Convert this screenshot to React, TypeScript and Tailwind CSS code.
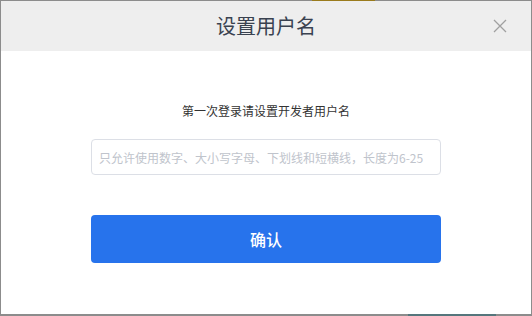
import React, { useState } from 'react';

const FONT = '"Noto Sans CJK SC", "Noto Sans", sans-serif';

const CloseIcon: React.FC = () => (
  <svg width="14" height="14" viewBox="0 0 14 14" fill="none">
    <path d="M1 1L13 13M13 1L1 13" stroke="#a0a0a0" strokeWidth="1.3" />
  </svg>
);

const App: React.FC = () => {
  const [username, setUsername] = useState('');

  return (
    <div className="w-[532px] h-[316px] bg-white" style={{ fontFamily: FONT }}>
      <div className="relative flex flex-col h-full border-t border-l border-r border-b-2 border-[#8c8c8c]">
        {/* background bleed from the page behind */}
        <span className="absolute -top-px left-[311px] w-[63px] h-px bg-[#9a7b1c]" />
        <span className="absolute -bottom-[2px] left-[407px] w-[88px] h-[2px] bg-[#55767c]" />

        <header className="relative flex items-center justify-center h-[50px] bg-[#eeeeee]">
          <h1 className="text-[20px] leading-none text-[#3a4250]">设置用户名</h1>
          <button className="absolute right-[24px] top-[18px] flex items-center justify-center w-[14px] h-[14px]">
            <CloseIcon />
          </button>
        </header>

        <main className="flex flex-col items-center pt-[51px]">
          <p className="text-[12px] leading-[18px] text-[#333333]">第一次登录请设置开发者用户名</p>
          <input
            type="text"
            value={username}
            onChange={(e) => setUsername(e.target.value)}
            placeholder="只允许使用数字、大小写字母、下划线和短横线，长度为6-25"
            className="mt-[19px] w-[350px] h-[36px] px-[7px] text-[12px] border border-[#dcdfe6] rounded-[4px] outline-none text-[#333] placeholder:text-[#c0c4cc]"
            style={{ fontFamily: FONT }}
          />
          <button
            className="mt-[40px] w-[350px] h-[48px] rounded-[4px] bg-[#2773ec] text-white text-[16px] font-medium"
            style={{ fontFamily: FONT }}
          >
            确认
          </button>
        </main>
      </div>
    </div>
  );
};

export default App;
